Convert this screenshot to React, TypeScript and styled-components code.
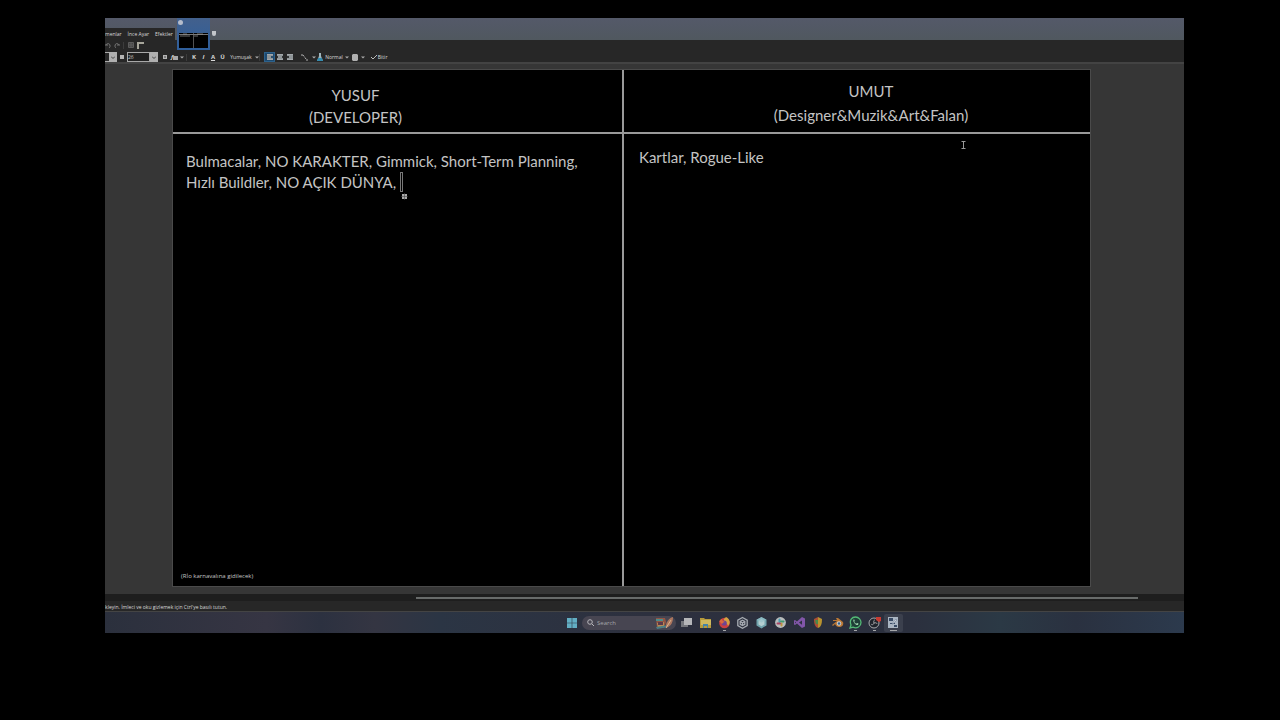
import React from "react";
import styled, { createGlobalStyle } from "styled-components";

const GlobalStyle = createGlobalStyle`
  * { box-sizing: border-box; }
  body { margin: 0; background: #000; color: #c4c4c4; font-family: "Open Sans", "Noto Sans", sans-serif; }
  button, input { font: inherit; color: inherit; border: 0; padding: 0; margin: 0; background: none; }
  svg { display: block; flex: none; }
`;

const Stage = styled.main`
  padding: 18px 96px 0 105px;
  overflow: hidden;
`;

const AppWindow = styled.section`
  position: relative;
  background: #272727;
  overflow: hidden;
`;

const TitleBar = styled.header`
  display: flex;
  align-items: flex-end;
  height: 22px;
  background: linear-gradient(#545969, #50585f);
`;

const MenuBar = styled.nav`
  display: flex;
  align-items: center;
  gap: 6px;
  width: 70px;
  height: 12px;
  background: #272727;
`;

const MenuButton = styled.button`
  font-size: 5px;
  line-height: 12px;
  white-space: nowrap;
  flex: none;
  color: #d8d8d8;
`;

const Pin = styled.span`
  width: 4px;
  height: 5px;
  margin: 0 0 4px 37px;
  background: #c2c6ca;
  border-radius: 0 0 2px 2px;
`;

const ThumbButton = styled.button`
  position: absolute;
  left: 72px;
  top: 0;
  width: 33px;
  height: 32px;
  padding: 15px 2px 2px;
  background: linear-gradient(#42608c, #2f5f9c);
`;

const ThumbDot = styled.span`
  position: absolute;
  left: 1px;
  top: 2px;
  width: 5px;
  height: 5px;
  border-radius: 50%;
  background: #b4bccb;
`;

const QuickRow = styled.div`
  display: flex;
  align-items: center;
  gap: 3px;
  height: 10px;
`;

const ToolRow = styled.div`
  display: flex;
  align-items: center;
  height: 14px;
  padding-top: 2px;
  border-bottom: 2px solid #434343;
`;

const Slot = styled.button<{ $w: number; $active?: boolean }>`
  display: flex;
  align-items: center;
  justify-content: center;
  flex: none;
  width: ${(p) => p.$w}px;
  height: 10px;
  font-size: 5px;
  line-height: 10px;
  white-space: nowrap;
  color: #d8d8d8;
  background: ${(p) => (p.$active ? "#1d4a70" : "none")};
  outline: ${(p) => (p.$active ? "1px solid #2c618c" : "none")};
  outline-offset: -1px;
`;

const Divider = styled.span<{ $w: number }>`
  flex: none;
  width: ${(p) => p.$w}px;
  height: 7px;
  border-left: 1px solid #3c3c3c;
`;

const Letter = styled.span<{ $italic?: boolean; $line?: boolean }>`
  font-size: 6px;
  font-weight: 700;
  font-style: ${(p) => (p.$italic ? "italic" : "normal")};
  text-decoration: ${(p) => (p.$line ? "underline" : "none")};
`;

const SizeField = styled.input`
  width: 23px;
  height: 10px;
  border: 1px solid #a8a8a8;
  font-size: 5px;
  background: #202020;
`;

const Drop = styled.button`
  display: flex;
  align-items: center;
  justify-content: center;
  width: 8px;
  height: 10px;
  background: #b0b0b0;
`;

const Workspace = styled.div`
  padding: 6px 94px 8px 68px;
  background: #363636;
`;

const Board = styled.div`
  display: grid;
  grid-template-columns: 451fr 466fr;
  outline: 1px solid #4a4a4a;
  background: #000;
  font-family: Lato, "Open Sans", sans-serif;
  font-size: 15px;
`;

const Column = styled.section<{ $divided?: boolean }>`
  display: flex;
  flex-direction: column;
  min-height: 516px;
  border-right: ${(p) => (p.$divided ? "2px solid #999" : "0")};
`;

const Heading = styled.h2<{ $lh: number; $shift: "left" | "right" }>`
  margin: 0;
  height: 64px;
  padding: ${(p) => (p.$shift === "left" ? "14px 84px 0 0" : "9px 0 0 28px")};
  border-bottom: 2px solid #999;
  font-size: 15px;
  font-weight: 400;
  line-height: ${(p) => p.$lh}px;
  text-align: center;
`;

const Note = styled.p<{ $top: number; $left: number }>`
  position: relative;
  margin: 0;
  padding: ${(p) => p.$top}px 14px 0 ${(p) => p.$left}px;
  line-height: 21px;
`;

const Caret = styled.span`
  display: inline-block;
  width: 3px;
  height: 20px;
  border: 1px solid #777;
  vertical-align: -4px;
  position: relative;
`;

const MoveHandle = styled.svg`
  position: absolute;
  left: 0;
  top: 20px;
`;

const IBeam = styled.svg`
  position: absolute;
  right: 124px;
  top: 7px;
`;

const Footnote = styled.p`
  margin: auto 0 5px 8px;
  font-family: "Open Sans", "Noto Sans", sans-serif;
  font-size: 6px;
  line-height: 10px;
`;

const ScrollTrack = styled.div`
  height: 7px;
  padding: 3px 46px 2px 311px;
  background: #1e1e1e;
`;

const ScrollThumb = styled.div`
  height: 2px;
  background: #686b6a;
`;

const StatusBar = styled.div`
  height: 11px;
  padding-top: 1px;
  font-size: 5px;
  line-height: 10px;
  white-space: nowrap;
  color: #d8d8d8;
  border-bottom: 1px solid #444;
  background: #272727;
`;

const Taskbar = styled.footer`
  display: flex;
  align-items: center;
  height: 21px;
  padding-left: 461px;
  background: linear-gradient(90deg, #2b303d, #363543 15%, #2c3140 20%, #343542 25%, #2b3544 31%, #2d303e 50%, #2b303e 75%, #2b3945 83%, #2a3140 90%, #2c3a4d);
`;

const TaskButton = styled.button<{ $active?: boolean }>`
  display: flex;
  align-items: center;
  justify-content: center;
  height: 18px;
  border-radius: 2px;
  background: ${(p) => (p.$active ? "#3b404d" : "none")};
`;

const Search = styled.label`
  display: flex;
  align-items: center;
  gap: 3px;
  width: 94px;
  height: 14px;
  margin: 0 1px 0 4px;
  padding: 0 2px 0 5px;
  border-radius: 7px;
  background: #474551;
`;

const SearchInput = styled.input`
  flex: 1;
  min-width: 0;
  font-size: 6px;
  &::placeholder { color: #a5a5aa; opacity: 1; }
`;

const Apps = styled.div`
  display: grid;
  grid-template-columns: repeat(12, 1fr);
  width: 226px;
`;

const Arrow = ({ dark }: { dark?: boolean }) => (
  <svg width="4" height="3" viewBox="0 0 4 3">
    {dark ? <path d="M0 .5 2 2.5 4 .5" fill="none" stroke="#444" /> : <path d="M0 .5h4L2 2.5z" fill="#aaa" />}
  </svg>
);

const Align = ({ side }: { side: "left" | "center" | "right" }) => {
  const x = side === "left" ? 0 : side === "center" ? 1 : 2;
  return (
    <svg width="6" height="6" viewBox="0 0 6 6">
      <path d={`M0 0h6v2H0zM${x} 2h4v2h-4zM0 4h6v2H0z`} fill="#a3a8ab" />
      <path d="M0 2h6M0 4h6" stroke="#555d63" strokeWidth=".5" />
    </svg>
  );
};

const icons: { name: string; art: React.ReactNode; running?: boolean; active?: boolean }[] = [
  { name: "Task view", art: <><path d="M1 5h7v6H1z" fill="#75777d" /><path d="M4 2h8v7H4z" fill="#b5b6b9" /></> },
  { name: "File Explorer", art: <><path d="M1 2h4l1 1h6v9H1z" fill="#b79b3c" /><path d="M2 4h10v5H2z" fill="#cfb95e" /><path d="M4 8h5v4H8v-2H5v2H4z" fill="#4384a9" /></> },
  { name: "Firefox", running: true, art: <><circle cx="6.5" cy="7" r="5.3" fill="#c94042" /><path d="M8 1c4 2 5 6 2 9-1-4-5-2-4-7z" fill="#d4a141" /><circle cx="6.2" cy="7" r="2.6" fill="#6d4594" /><path d="M1 5c1 0 2-2 3-2 0 2 2 2 3 3-2 0-2 1-3 2" fill="#db6a3c" /></> },
  { name: "Unity Hub", art: <g fill="none" stroke="#a6abb2" strokeWidth="1.3"><path d="m6.5 1.5 4.7 2.7v5.3l-4.7 2.7-4.7-2.7V4.2z" /><path d="m6.5 4.2 2.3 1.3v2.8L6.5 9.6 4.2 8.3V5.5zM6.5 7v2.6M6.5 7l2.3-1.5M6.5 7 4.2 5.5" /></g> },
  { name: "Package", art: <><path d="m6.5 1 5 2.8v5.8l-5 2.8-5-2.8V3.8z" fill="#71a4ad" /><path d="m6.5 3 3 1.8v3.6l-3 1.8-3-1.8V4.8z" fill="#b4ced1" /><path d="m6.5 1 5 2.8-5 2.8-5-2.8z" fill="#96c2c9" opacity=".7" /></> },
  { name: "Slack", art: <><circle cx="6.5" cy="6.5" r="5.4" fill="#b9bcbc" /><g fill="none" strokeWidth="2" strokeLinecap="round"><path d="M5.5 3.5V6" stroke="#4c9eb3" /><path d="M7 5.5h2.5" stroke="#449a72" /><path d="M7.5 7.5v2" stroke="#bd9440" /><path d="M3.5 7.5H6" stroke="#aa4565" /></g></> },
  { name: "Visual Studio", art: <path d="m9 1 3 1.5v8L9 12 4 7.5 2 9 1 8.500v-4L2 4l2 1.500zm0 3.500L6 6.500l3 2.200zM2 5.500v2l1-1z" fill="#8156a8" fillRule="evenodd" /> },
  { name: "Paint tool", art: <><path d="M2 3 6 1v11C3 11 2 8 2 3z" fill="#a94e35" /><path d="m6 1 4 2c0 5-1 8-4 9z" fill="#b8922f" /><path d="M3 4h3v4H4z" fill="#4b8948" /></> },
  { name: "Blender", art: <><path d="m1 9 5-4H2V4h4L5 2h2l5 4c1 3-1 5-4 5-2 0-3-1-4-3L2 10z" fill="#b97735" /><circle cx="8" cy="7.5" r="2.2" fill="#cbced0" /><circle cx="8" cy="7.5" r="1.2" fill="#315f8d" /></> },
  { name: "WhatsApp", running: true, art: <><path d="m1 12 1-3C0 4 3 1 6.5 1 10 1 12 4 12 6.5c0 4-4 6.5-8 4.7z" fill="#1f3e37" stroke="#54ba77" strokeWidth="1.3" /><path d="M4.5 3.5c-1 2 2 6 4.5 5.5l.5-1.5-1.5-.5-.8.7C6 7.2 5.5 6.5 5.2 5.8l.6-.8-.5-1.5z" fill="#9bd3ab" /></> },
  { name: "OBS Studio", running: true, art: <><circle cx="6" cy="7" r="5" fill="#20242c" stroke="#a6a8ac" /><path d="M6 7c-1-3 1-3 1-3M6 7c3-1 3 1 3 1M6 7c-1 3-3 1-3 1" fill="none" stroke="#a0a1a4" /><path d="M8 1h5v4l-2 1-3-2z" fill="#c83b32" /></> },
  { name: "Paint.NET", active: true, running: true, art: <><path d="M1 1h10v11H1z" fill="#aab5c2" /><path d="M2 2h4v3H2zM3 7h5v1H3zM7 9h3v2H7z" fill="#394b65" /><path d="m5 8 4-5 1 1-4 4z" fill="#e1e3e6" stroke="#586c88" strokeWidth=".5" /></> },
];

export default function App() {
  return (
    <>
      <GlobalStyle />
      <Stage>
        <AppWindow>
          <TitleBar>
            <MenuBar>
              <MenuButton>menlar</MenuButton>
              <MenuButton>İnce Ayar</MenuButton>
              <MenuButton>Efektler</MenuButton>
            </MenuBar>
            <Pin />
          </TitleBar>
          <ThumbButton aria-label="Open image">
            <ThumbDot />
            <svg width="29" height="15" viewBox="0 0 29 15"><path d="M0 0h29v15H0z" fill="#000" /><path d="M14.5 0v15" stroke="#525252" /><path d="M0 1.5h29" stroke="#777" /><path d="M4 1h4M18 1h6M1 3h10M15 3h4" stroke="#999" strokeWidth=".7" /></svg>
          </ThumbButton>
          <QuickRow>
            <Slot $w={6} aria-label="Undo"><svg width="6" height="7" viewBox="0 0 6 7" fill="none" stroke="#777"><path d="M1 3c1-2 4-2 4 1 0 1 0 1-1 2M0 3h3" /></svg></Slot>
            <Slot $w={6} aria-label="Redo"><svg width="6" height="7" viewBox="0 0 6 7" fill="none" stroke="#777"><path d="M5 3C4 1 1 1 1 4c0 1 0 1 1 2M6 3H3" /></svg></Slot>
            <Divider $w={2} />
            <Slot $w={6} aria-label="Grid"><svg width="6" height="6" viewBox="0 0 6 6" stroke="#5c5c5c" fill="#444"><path d="M.5.5h5v5h-5zM3 0v6M0 3h6" /></svg></Slot>
            <Slot $w={7} aria-label="Rulers"><svg width="7" height="7" viewBox="0 0 7 7" fill="none" stroke="#a7a69b" strokeWidth="2"><path d="M1 7V1h6" /></svg></Slot>
          </QuickRow>
          <ToolRow>
            <Slot $w={4} aria-label="Font"><svg width="4" height="10"><path d="M0 0h4v1H0zm0 9h4v1H0z" fill="#aaa" /></svg></Slot>
            <Drop aria-label="Choose font"><Arrow dark /></Drop>
            <Slot $w={10} aria-label="Smaller text"><svg width="4" height="4"><path d="M0 0h4v4H0z" fill="#b4b4b4" /></svg></Slot>
            <SizeField aria-label="Font size" defaultValue="26" />
            <Drop aria-label="Choose size"><Arrow dark /></Drop>
            <Slot $w={13} aria-label="Larger text"><svg width="4" height="4"><path d="M0 0h4v4H0z" fill="#b4b4b4" /><path d="M2 1v2M1 2h2" stroke="#555" strokeWidth=".7" /></svg></Slot>
            <Slot $w={7} aria-label="Text effects"><Letter $italic>f</Letter><svg width="5" height="5"><path d="M0 1h5v4H0z" fill="#aaa" /></svg></Slot>
            <Slot $w={8} aria-label="More effects"><Arrow /></Slot>
            <Divider $w={3} />
            <Slot $w={10}><Letter>K</Letter></Slot>
            <Slot $w={9}><Letter $italic>I</Letter></Slot>
            <Slot $w={10}><Letter $line>A</Letter></Slot>
            <Slot $w={9}><Letter>Ü</Letter></Slot>
            <Slot $w={28}>Yumuşak</Slot>
            <Slot $w={4} aria-label="Smoothing"><Arrow /></Slot>
            <Divider $w={5} />
            <Slot $w={11} $active aria-label="Align left"><Align side="left" /></Slot>
            <Slot $w={10} aria-label="Align center"><Align side="center" /></Slot>
            <Slot $w={10} aria-label="Align right"><Align side="right" /></Slot>
            <Slot $w={18} aria-label="Curve"><svg width="7" height="7" viewBox="0 0 7 7" fill="none" stroke="#b1b1b1"><path d="M0 1h2m0 0 3 4m0 1h2" strokeDasharray="2 1" /></svg></Slot>
            <Slot $w={2} aria-label="Curve type"><Arrow /></Slot>
            <Slot $w={9} aria-label="Blending"><svg width="6" height="8" viewBox="0 0 6 8"><path d="M2 0h2v3l2 5H0l2-5z" fill="#9fb6bd" /><path d="m1 5-1 3h6L5 5z" fill="#338cb0" /></svg></Slot>
            <Slot $w={20}>Normal</Slot>
            <Slot $w={6} aria-label="Blend mode"><Arrow /></Slot>
            <Slot $w={9} aria-label="Clipping"><svg width="6" height="7" viewBox="0 0 6 7"><path d="M1 0h4l1 1v5L5 7H1L0 6V1z" fill="#b0b0b0" /></svg></Slot>
            <Slot $w={7} aria-label="Clipping mode"><Arrow /></Slot>
            <Slot $w={26}><svg width="6" height="6" viewBox="0 0 6 6" fill="none" stroke="#bbb"><path d="m0 3 2 2 4-4" /></svg>&nbsp;Bitir</Slot>
          </ToolRow>
          <Workspace>
            <Board>
              <Column $divided>
                <Heading $lh={22} $shift="left">YUSUF<br />(DEVELOPER)</Heading>
                <Note $top={17} $left={13}>
                  Bulmacalar, NO KARAKTER, Gimmick, Short-Term Planning,<br />
                  Hızlı Buildler, NO AÇIK DÜNYA, <Caret><MoveHandle width="7" height="7" viewBox="0 0 7 7"><path d="M1 1h5v5H1z" fill="#aaa" /><path d="M3.5 0v7M0 3.5h7" stroke="#444" strokeWidth=".6" /></MoveHandle></Caret>
                </Note>
                <Footnote>(Rİo karnavalına gidilecek)</Footnote>
              </Column>
              <Column>
                <Heading $lh={24} $shift="right">UMUT<br />(Designer&amp;Muzik&amp;Art&amp;Falan)</Heading>
                <Note $top={13} $left={15}>
                  Kartlar, Rogue-Like
                  <IBeam width="5" height="8" viewBox="0 0 5 8" fill="none" stroke="#999"><path d="M.5.5h4M2.5.5v7M.5 7.5h4" /></IBeam>
                </Note>
              </Column>
            </Board>
          </Workspace>
          <ScrollTrack><ScrollThumb /></ScrollTrack>
          <StatusBar>kleyin. İmleci ve oku gizlemek için Ctrl'ye basılı tutun.</StatusBar>
          <Taskbar>
            <TaskButton aria-label="Start"><svg width="12" height="12" viewBox="0 0 12 12" fill="#62aec3"><path d="M1 1h4.7v4.7H1zM6.3 1H11v4.7H6.3zM1 6.3h4.7V11H1zM6.3 6.3H11V11H6.3z" /></svg></TaskButton>
            <Search>
              <svg width="7" height="7" viewBox="0 0 7 7" fill="none" stroke="#b7b7bb"><circle cx="3" cy="3" r="2.3" /><path d="m5 5 2 2" /></svg>
              <SearchInput aria-label="Search" placeholder="Search" />
              <svg width="18" height="12" viewBox="0 0 18 12"><path d="M0 1h9l1 4-2 6H1z" fill="#935544" /><path d="M0 2h7v2H0z" fill="#4d8e8b" /><path d="m1 6 7-1v4l-6 2z" fill="#b88b53" /><path d="M2 5h5v3H2z" fill="#5b394b" /><path d="m0 10 12-2v2L1 12z" fill="#4c7e85" /><path d="M10 9c0-4 3-8 7-9 0 4-1 9-7 11z" fill="#ad765e" /><path d="m10 11 5-8" stroke="#d7b38d" /></svg>
            </Search>
            <Apps>
              {icons.map((icon) => (
                <TaskButton key={icon.name} aria-label={icon.name} $active={icon.active}>
                  <svg width="13" height="18" viewBox="0 -2 13 18">
                    <svg x="0" y="0" width="13" height="13" viewBox="0 0 13 13">{icon.art}</svg>
                    {icon.running && <path d={icon.active ? "M3 14.5h7" : "M5 14.5h3"} stroke="#a5a7aa" />}
                  </svg>
                </TaskButton>
              ))}
            </Apps>
          </Taskbar>
        </AppWindow>
      </Stage>
    </>
  );
}
